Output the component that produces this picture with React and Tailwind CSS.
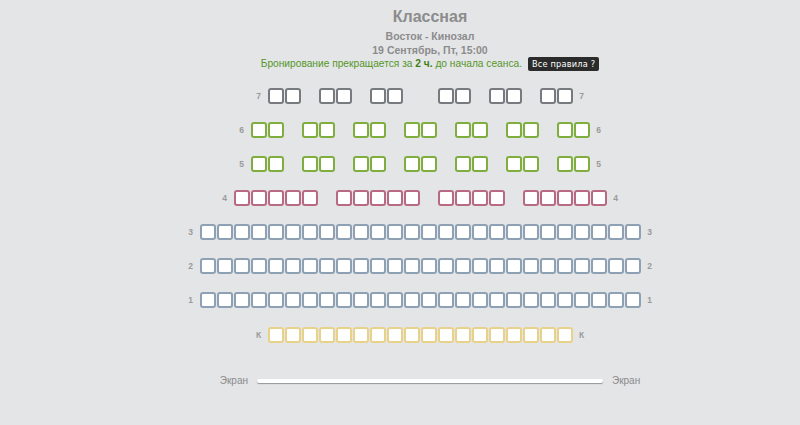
import React from "react";

const rows = [
  { label: "7", layout: "ss_ss_ss__ss_ss_ss", cls: "border-[#777a7e]" },
  { label: "6", layout: "ss_ss_ss_ss_ss_ss_ss", cls: "border-[#7fae3e]" },
  { label: "5", layout: "ss_ss_ss_ss_ss_ss_ss", cls: "border-[#7fae3e]" },
  { label: "4", layout: "sssss_sssss_ssss_sssss", cls: "border-[#b86a82]" },
  { label: "3", layout: "s".repeat(26), cls: "border-[#8ea0b3]" },
  { label: "2", layout: "s".repeat(26), cls: "border-[#8ea0b3]" },
  { label: "1", layout: "s".repeat(26), cls: "border-[#8ea0b3]" },
  { label: "К", layout: "s".repeat(18), cls: "border-[#e8d28a]" },
];

function Row({ label, layout, cls, extra }) {
  return (
    <div className={"flex items-center justify-center " + (extra || "")}>
      <span className="w-[12px] text-center text-[8.5px] font-bold text-[#9a9a9a] mr-[3px]">{label}</span>
      <div className="flex gap-px">
        {layout.split("").map((c, i) =>
          c === "s" ? (
            <div key={i} className={"w-4 h-4 bg-white border-2 rounded-[3px] " + cls} />
          ) : (
            <div key={i} className="w-4 h-4" />
          )
        )}
      </div>
      <span className="w-[12px] text-center text-[8.5px] font-bold text-[#9a9a9a] ml-[3px]">{label}</span>
    </div>
  );
}

export default function App() {
  return (
    <div className="w-[800px] h-[425px] bg-[#e4e5e7] font-['Liberation_Sans',Arial,sans-serif] overflow-hidden">
      <div className="w-[860px] flex flex-col items-center pt-[7px]">
        <div className="text-[16px] leading-[20px] font-bold text-[#8c8c8c]">Классная</div>
        <div className="mt-[2px] text-[10.5px] leading-[14px] font-bold text-[#8c8c8c]">Восток - Кинозал</div>
        <div className="text-[10.5px] leading-[14px] font-bold text-[#8c8c8c]">19 Сентябрь, Пт, 15:00</div>
        <div className="flex items-center h-[14px]">
          <span className="text-[10.2px] leading-[14px] text-[#55962a]">
            Бронирование прекращается за <b className="text-[#3f7f18]">2 ч.</b> до начала сеанса.
          </span>
          <span className="ml-[6px] h-[14px] px-[4px] rounded-[2px] bg-[#2b2b2b] text-white text-[8.2px] leading-[14px] font-['DejaVu_Sans',sans-serif] tracking-[0.2px]">
            Все правила ?
          </span>
        </div>

        <div className="mt-[17px] mr-[20px] flex flex-col gap-[18px]">
          {rows.map((r, i) => (
            <Row key={i} {...r} extra={r.label === "К" ? "mt-px" : ""} />
          ))}
        </div>

        <div className="mt-[30px] flex items-center">
          <span className="text-[10px] text-[#8a8a8a] mr-[9px]">Экран</span>
          <div className="w-[346px] h-[4px] rounded-full bg-white shadow-[0_1px_1px_rgba(0,0,0,0.35)]" />
          <span className="text-[10px] text-[#8a8a8a] ml-[9px]">Экран</span>
        </div>
      </div>
    </div>
  );
}
